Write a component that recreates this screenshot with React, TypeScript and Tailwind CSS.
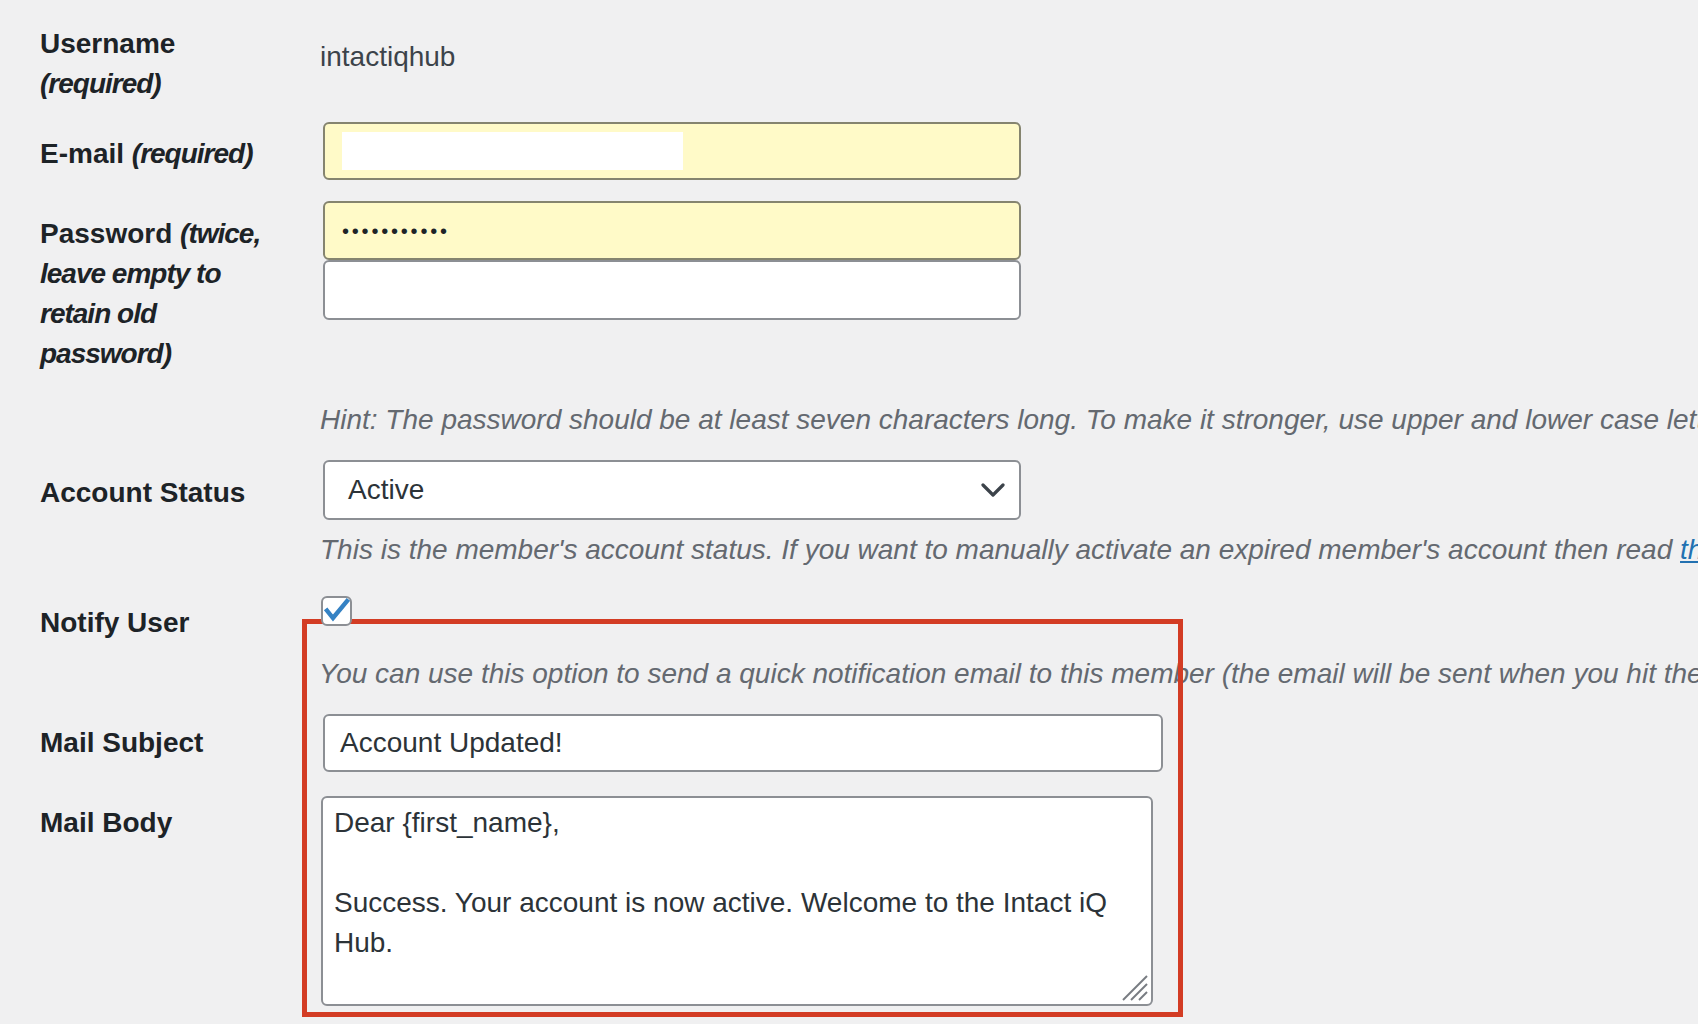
import React from 'react';

const labelCls = 'text-[28px] leading-[40px] font-bold text-[#1d2327]';
const descCls = 'text-[28px] leading-[40px] italic text-[#646970] whitespace-nowrap';
const fieldBorder = 'border-2 border-[#8c8f94] rounded-[6px]';
const autofill = 'border-2 border-[#85846f] rounded-[6px] bg-[#fffac8]';

function Label({ children, pt }: { children: React.ReactNode; pt: string }) {
  return (
    <div className={`w-[283px] shrink-0 ${pt}`}>
      <div className={`w-[240px] ${labelCls}`}>{children}</div>
    </div>
  );
}

function Note({ children }: { children: React.ReactNode }) {
  return <i className="tracking-[-1px]">{children}</i>;
}

function Chevron() {
  return (
    <svg width="24" height="15" viewBox="0 0 24 15" fill="none">
      <polyline points="2,2 12,12 22,2" stroke="#3c434a" strokeWidth="3.2" strokeLinecap="round" strokeLinejoin="round" />
    </svg>
  );
}

function CheckIcon() {
  return (
    <svg width="31" height="30" viewBox="0 0 31 30" fill="none" className="absolute -left-[2px] -top-[2px]">
      <polyline points="6,14.5 12,22 26,5" stroke="#3582c4" strokeWidth="4.4" strokeLinecap="square" strokeLinejoin="miter" />
    </svg>
  );
}

function ResizeHandle() {
  return (
    <svg width="30" height="30" viewBox="0 0 30 30" className="absolute right-[2px] bottom-[2px]">
      <line x1="4" y1="28" x2="28" y2="4" stroke="#787c82" strokeWidth="2" />
      <line x1="12" y1="28" x2="28" y2="12" stroke="#787c82" strokeWidth="2" />
      <line x1="20" y1="28" x2="28" y2="20" stroke="#787c82" strokeWidth="2" />
    </svg>
  );
}

export default function App() {
  return (
    <div className="relative w-[1698px] h-[1024px] overflow-hidden bg-[#f0f0f1] font-['Liberation_Sans',Arial,sans-serif]">
      <div className="pl-[40px] pt-[24px]">
        {/* Username */}
        <div className="flex">
          <Label pt="pt-0">
            Username <Note>(required)</Note>
          </Label>
          <div className="pt-[13px] text-[28px] leading-[40px] text-[#3c434a] -ml-[3px]">intactiqhub</div>
        </div>

        {/* E-mail */}
        <div className="flex mt-[18px]">
          <Label pt="pt-[12px]">
            E-mail <Note>(required)</Note>
          </Label>
          <div className={`w-[698px] h-[58px] flex items-center pl-[17px] ${autofill}`}>
            <div className="w-[341px] h-[38px] bg-white" />
          </div>
        </div>

        {/* Password */}
        <div className="flex mt-[21px]">
          <Label pt="pt-[13px]">
            Password <Note>(twice, leave empty to retain old password)</Note>
          </Label>
          <div className="flex flex-col">
            <div className={`w-[698px] h-[59px] flex items-center pl-[17px] ${autofill}`}>
              <span className="text-[20px] tracking-[2.8px] text-[#1d2327] leading-none">•••••••••••</span>
            </div>
            <div className={`w-[698px] h-[60px] bg-white ${fieldBorder}`} />
          </div>
        </div>

        <div className={`mt-[26px] ml-[280px] ${descCls}`}>
          Hint: The password should be at least seven characters long. To make it stronger, use upper and lower case letters, numbers, and symbols like ! " ? $ % ^ &amp; ).
        </div>

        {/* Account status */}
        <div className="flex mt-[20px]">
          <Label pt="pt-[13px]">Account Status</Label>
          <div className={`w-[698px] h-[60px] bg-white flex items-center justify-between pl-[23px] pr-[14px] ${fieldBorder}`}>
            <span className="text-[28px] text-[#2c3338]">Active</span>
            <Chevron />
          </div>
        </div>
        <div className={`mt-[10px] ml-[280px] ${descCls}`}>
          This is the member's account status. If you want to manually activate an expired member's account then read{' '}
          <span className="text-[#2271b1] underline">this documentation</span> to understand how to do it.
        </div>

        {/* Notify user */}
        <div className="flex mt-[26px]">
          <Label pt="pt-[7px]">Notify User</Label>
          <div className="flex flex-col -ml-[2px]">
            <div className={`relative z-10 w-[31px] h-[30px] bg-white ${fieldBorder}`}>
              <CheckIcon />
            </div>
            <div className={`mt-[28px] -ml-[2px] ${descCls}`}>
              You can use this option to send a quick notification email to this member (the email will be sent when you hit the save button below)
            </div>
          </div>
        </div>

        {/* Mail subject */}
        <div className="flex mt-[20px]">
          <Label pt="pt-[9px]">Mail Subject</Label>
          <div className={`w-[840px] h-[58px] bg-white flex items-center pl-[15px] ${fieldBorder}`}>
            <span className="text-[28px] text-[#2c3338]">Account Updated!</span>
          </div>
        </div>

        {/* Mail body */}
        <div className="flex mt-[24px]">
          <Label pt="pt-[7px]">Mail Body</Label>
          <div className={`relative -ml-[2px] w-[832px] h-[210px] bg-white pl-[11px] pt-[5px] text-[28px] leading-[40px] text-[#2c3338] ${fieldBorder}`}>
            <div>Dear {'{first_name}'},</div>
            <div className="h-[40px]" />
            <div>Success. Your account is now active. Welcome to the Intact iQ</div>
            <div>Hub.</div>
            <ResizeHandle />
          </div>
        </div>
      </div>

      {/* Annotation highlight */}
      <div className="absolute left-[302px] top-[619px] w-[881px] h-[398px] border-[5px] border-[#d33c24] pointer-events-none" />
    </div>
  );
}
